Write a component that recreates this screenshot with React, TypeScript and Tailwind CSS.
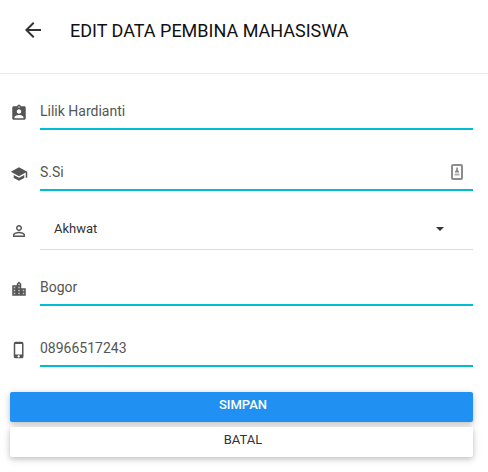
import type { ReactNode } from 'react';
import {
  MdArrowBack,
  MdAssignmentInd,
  MdPermIdentity,
  MdPhoneIphone,
  MdSchool,
} from 'react-icons/md';

function CityIcon() {
  return (
    <svg width="18" height="18" viewBox="0 0 24 24" className="block">
      <path d="M15 11V5l-3-3-3 3v2H3v14h18V11z" fill="#555" />
      <path
        d="M5 9h2v2H5zM5 13h2v2H5zM5 17h2v2H5zM11 5h2v2h-2zM11 9h2v2h-2zM11 13h2v2h-2zM11 17h2v2h-2zM17 13h2v2h-2zM17 17h2v2h-2z"
        fill="#fff"
        fillOpacity="0.65"
      />
    </svg>
  );
}

function AutofillIcon() {
  return (
    <svg width="12" height="16" viewBox="0 0 12 16" className="block">
      <rect x="1" y="1" width="10" height="14" rx="1" fill="#fff" stroke="#8c8c8c" strokeWidth="2" />
      <path d="M5.2 3.5h1.6V6L8 7.5v1H4v-1L5.2 6z" fill="#888" />
      <path d="M3.5 9.5h5v2h-5z" fill="#b0b0b0" />
    </svg>
  );
}

type FieldProps = { icon: ReactNode; value: string; trailing?: ReactNode; className: string };

function Field({ icon, value, trailing, className }: FieldProps) {
  return (
    <div className={`flex pl-[10px] pr-[15px] ${className}`}>
      <div className="mt-[11px] w-[30px] text-[18px] text-[#555]">{icon}</div>
      <div className="flex h-[37px] flex-1 justify-between border-b-2 border-[#00bcd4] pr-[10px]">
        <span className="pt-[8px] text-[14px] leading-[20px] text-[#555]">{value}</span>
        {trailing}
      </div>
    </div>
  );
}

export default function App() {
  return (
    <div className="h-[472px] w-[488px] overflow-hidden bg-white font-['Roboto',sans-serif]">
      <header className="flex h-[74px] border-b border-[#e9e9e9] pl-[21px]">
        <MdArrowBack className="mt-[18px] text-[24px] text-[#333]" />
        <h1 className="ml-[25px] mt-[18px] text-[18px] leading-[25px] text-[#111]">
          EDIT DATA PEMBINA MAHASISWA
        </h1>
      </header>

      <Field className="mt-[19px]" icon={<MdAssignmentInd />} value="Lilik Hardianti" />
      <Field
        className="mt-[24px]"
        icon={<MdSchool />}
        value="S.Si"
        trailing={<div className="pt-[10px]"><AutofillIcon /></div>}
      />

      <div className="mt-[24px] flex pl-[10px] pr-[15px]">
        <div className="mt-[7px] w-[30px] text-[18px] text-[#555]"><MdPermIdentity /></div>
        <div className="flex h-[35px] flex-1 justify-between border-b border-[#ddd] pl-[14px] pr-[29px]">
          <span className="pt-[4px] text-[13px] leading-[20px] text-[#333]">Akhwat</span>
          <svg width="8" height="4" viewBox="0 0 8 4" className="mt-[12px]">
            <path d="M0 0h8L4 4z" fill="#333" />
          </svg>
        </div>
      </div>

      <Field className="mt-[19px]" icon={<CityIcon />} value="Bogor" />
      <Field className="mt-[24px]" icon={<MdPhoneIphone />} value="08966517243" />

      <div className="mt-[25px] flex flex-col gap-[5px] pl-[10px] pr-[15px]">
        <button className="h-[30px] rounded-[2px] bg-[#2091f2] pb-[4px] pl-[3px] text-[13px] font-medium leading-[20px] text-white shadow-[0_2px_5px_rgba(0,0,0,0.16),0_2px_10px_rgba(0,0,0,0.12)]">
          SIMPAN
        </button>
        <button className="h-[30px] rounded-[2px] bg-white pb-[4px] pl-[3px] text-[13px] leading-[20px] text-[#333] shadow-[0_2px_5px_rgba(0,0,0,0.16),0_2px_10px_rgba(0,0,0,0.12)]">
          BATAL
        </button>
      </div>
    </div>
  );
}
